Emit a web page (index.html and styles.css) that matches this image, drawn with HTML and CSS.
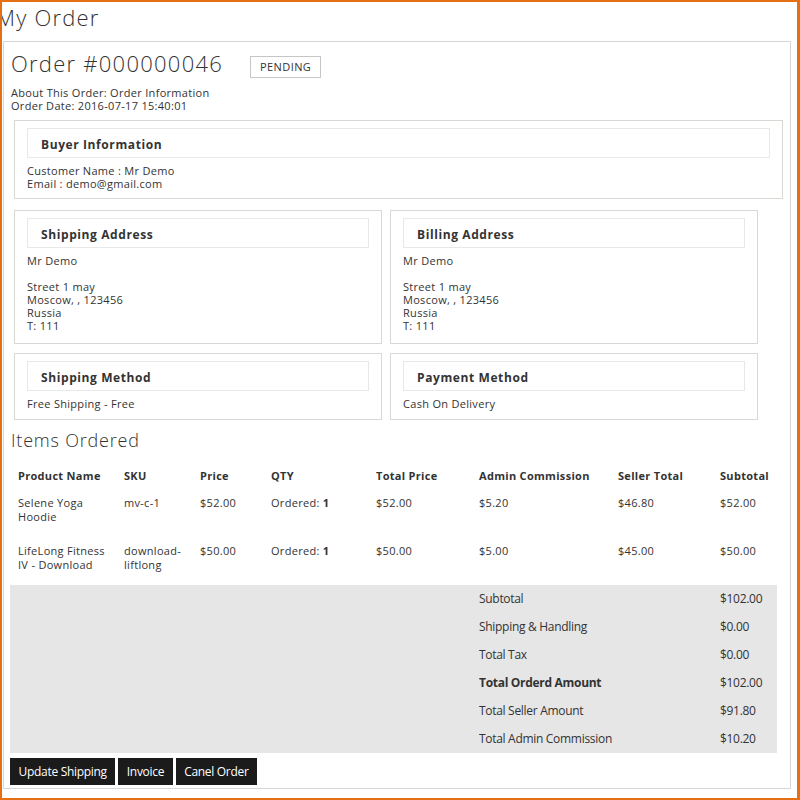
FILE: index.html
```html
<!DOCTYPE html>
<html lang="en">
<head>
<meta charset="utf-8">
<title>My Order</title>
<link rel="stylesheet" href="styles.css">
</head>
<body>
<h1 class="page-title">My Order</h1>
<div class="order-view">
  <div class="order-head">
    <span class="order-number">Order #000000046</span>
    <span class="order-status">Pending</span>
  </div>
  <div class="order-meta">
    <div>About This Order: Order Information</div>
    <div>Order Date: 2016-07-17 15:40:01</div>
  </div>

  <div class="box box-buyer">
    <div class="box-title">Buyer Information</div>
    <div class="box-content">
      <div>Customer Name : Mr Demo</div>
      <div>Email : demo@gmail.com</div>
    </div>
  </div>

  <div class="box-row">
    <div class="box box-address">
      <div class="box-title">Shipping Address</div>
      <div class="box-content">
        <div>Mr Demo</div>
        <div class="blank">&nbsp;</div>
        <div>Street 1 may</div>
        <div>Moscow, , 123456</div>
        <div>Russia</div>
        <div>T: 111</div>
      </div>
    </div>
    <div class="box box-address">
      <div class="box-title">Billing Address</div>
      <div class="box-content">
        <div>Mr Demo</div>
        <div class="blank">&nbsp;</div>
        <div>Street 1 may</div>
        <div>Moscow, , 123456</div>
        <div>Russia</div>
        <div>T: 111</div>
      </div>
    </div>
  </div>

  <div class="box-row box-row-method">
    <div class="box box-method">
      <div class="box-title">Shipping Method</div>
      <div class="box-content">Free Shipping - Free</div>
    </div>
    <div class="box box-method">
      <div class="box-title">Payment Method</div>
      <div class="box-content">Cash On Delivery</div>
    </div>
  </div>

  <h2 class="items-title">Items Ordered</h2>

  <table class="items">
    <colgroup>
      <col class="c-name"><col class="c-sku"><col class="c-price"><col class="c-qty">
      <col class="c-total"><col class="c-admin"><col class="c-seller"><col class="c-sub">
    </colgroup>
    <thead>
      <tr>
        <th>Product Name</th><th>SKU</th><th>Price</th><th>QTY</th>
        <th>Total Price</th><th>Admin Commission</th><th>Seller Total</th><th>Subtotal</th>
      </tr>
    </thead>
    <tbody>
      <tr>
        <td>Selene Yoga Hoodie</td><td>mv-c-1</td><td>$52.00</td><td>Ordered: <b>1</b></td>
        <td>$52.00</td><td>$5.20</td><td>$46.80</td><td>$52.00</td>
      </tr>
      <tr>
        <td>LifeLong Fitness IV - Download</td><td>download-liftlong</td><td>$50.00</td><td>Ordered: <b>1</b></td>
        <td>$50.00</td><td>$5.00</td><td>$45.00</td><td>$50.00</td>
      </tr>
    </tbody>
    <tfoot>
      <tr><td colspan="5"></td><td colspan="2">Subtotal</td><td>$102.00</td></tr>
      <tr><td colspan="5"></td><td colspan="2">Shipping &amp; Handling</td><td>$0.00</td></tr>
      <tr><td colspan="5"></td><td colspan="2">Total Tax</td><td>$0.00</td></tr>
      <tr class="grand"><td colspan="5"></td><td colspan="2"><b>Total Orderd Amount</b></td><td>$102.00</td></tr>
      <tr><td colspan="5"></td><td colspan="2">Total Seller Amount</td><td>$91.80</td></tr>
      <tr><td colspan="5"></td><td colspan="2">Total Admin Commission</td><td>$10.20</td></tr>
    </tfoot>
  </table>

  <div class="actions">
    <button class="btn" type="button">Update Shipping</button>
    <button class="btn" type="button">Invoice</button>
    <button class="btn" type="button">Canel Order</button>
  </div>
</div>
</body>
</html>
```
FILE: styles.css
```css
html {
  background: #fff;
}

body {
  margin: 0;
  width: 800px;
  height: 800px;
  box-sizing: border-box;
  border: 2px solid #e56f13;
  border-right-width: 3px;
  overflow: hidden;
  background: #fff;
  font-family: "Open Sans", "Liberation Sans", sans-serif;
  font-size: 11px;
  line-height: 13px;
  letter-spacing: 0.3px;
  color: #333;
}

.page-title {
  margin: 0 0 9px;
  font-size: 22px;
  font-weight: 300;
  line-height: 30px;
  letter-spacing: 1.2px;
  text-indent: -6px;
  color: #333;
}

.order-view {
  margin-left: 1px;
  width: 788px;
  box-sizing: border-box;
  border: 1px solid #d6d6d6;
  padding-bottom: 3px;
}

.order-head {
  display: flex;
  align-items: flex-start;
  margin: 6px 0 0 7px;
  height: 30px;
}

.order-number {
  font-size: 22px;
  font-weight: 300;
  line-height: 30px;
  letter-spacing: 1.25px;
  color: #333;
}

.order-status {
  margin: 8px 0 0 27px;
  padding: 3px 9px;
  border: 1px solid #c6c6c6;
  font-size: 11px;
  line-height: 14px;
  letter-spacing: 0.4px;
  text-transform: uppercase;
  color: #333;
}

.order-meta {
  margin: 8px 0 0 7px;
}

.box {
  border: 1px solid #d8d8d4;
  padding: 7px 12px 8px;
  box-sizing: border-box;
}

.box-buyer {
  margin: 8px 7px 0 10px;
}

.box-title {
  border: 1px solid #e8e8e8;
  padding: 7px 13px 4px;
  font-size: 12px;
  font-weight: 700;
  line-height: 17px;
  letter-spacing: 0.6px;
  color: #333;
}

.box-content {
  margin-top: 6px;
}

.box-row {
  display: flex;
  gap: 8px;
  margin: 11px 0 0 10px;
}

.box-row-method {
  margin-top: 9px;
}

.box-address,
.box-method {
  width: 368px;
}

.box-address {
  padding-bottom: 11px;
}

.box-method {
  padding-bottom: 9px;
}

.items-title {
  margin: 9px 0 0 7px;
  font-size: 18px;
  font-weight: 300;
  line-height: 22px;
  letter-spacing: 0.8px;
  color: #333;
}

.items {
  margin: 11px 0 0 6px;
  width: 767px;
  border-collapse: collapse;
  table-layout: fixed;
}

.c-name { width: 106px; }
.c-sku { width: 76px; }
.c-price { width: 71px; }
.c-qty { width: 105px; }
.c-total { width: 103px; }
.c-admin { width: 139px; }
.c-seller { width: 102px; }
.c-sub { width: 65px; }

.items th {
  padding: 7px 8px 6px;
  text-align: left;
  font-weight: 700;
  line-height: 14px;
  color: #333;
}

.items tbody td {
  padding: 7px 8px 14px;
  vertical-align: top;
  line-height: 13.5px;
}

.items tfoot tr {
  background: #e6e6e6;
}

.items tfoot td {
  padding: 7px 8px;
  font-size: 12px;
  line-height: 14px;
  letter-spacing: -0.3px;
}

.actions {
  display: flex;
  gap: 3px;
  margin: 5px 0 0 6px;
}

.btn {
  border: 0;
  margin: 0;
  padding: 6px 8.5px;
  background: #1b1b1b;
  color: #fff;
  font-family: "Open Sans", "Liberation Sans", sans-serif;
  font-size: 12px;
  line-height: 15px;
  letter-spacing: -0.3px;
  cursor: pointer;
}
```
